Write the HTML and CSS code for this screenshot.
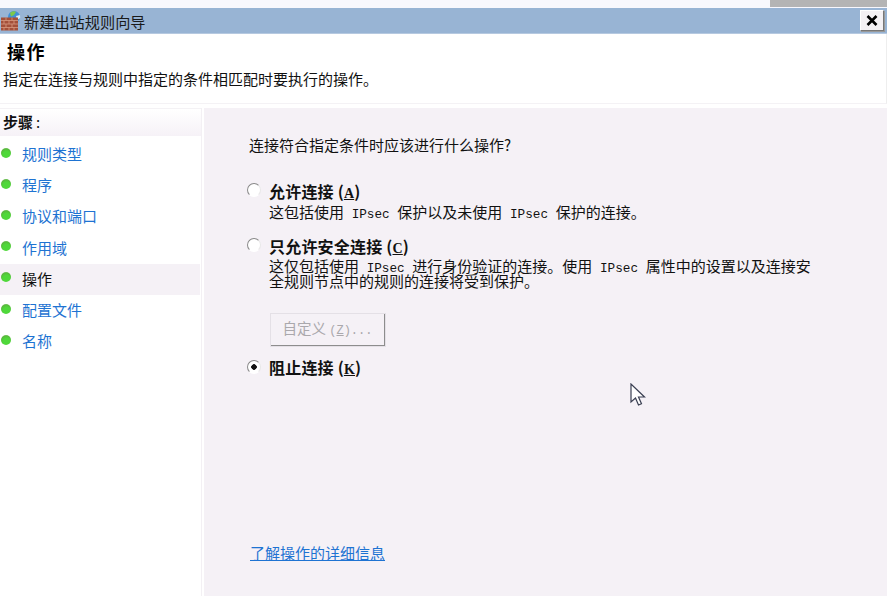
FILE: index.html
```html
<!DOCTYPE html>
<html lang="zh-CN">
<head>
<meta charset="utf-8">
<title>新建出站规则向导</title>
<link rel="stylesheet" href="styles.css">
</head>
<body>
<div class="topstrip"><div class="topstrip-grey"></div></div>
<div class="titlebar">
  <svg class="appicon" width="20" height="22" viewBox="0 0 20 22">
    <circle cx="13" cy="7" r="6" fill="#3f8fd8"/>
    <path d="M9 3c2-2 5-2 6-1l-2 3-3 1.500z" fill="#7ec84a"/>
    <path d="M15 6l4-1 .2 3-3 2z" fill="#dfeaf3"/>
    <rect x="0" y="7.500" width="17" height="13" fill="#a4503a"/>
    <path d="M0 10.500h17M0 14h17M0 17.500h17M5 7.500v3M11 7.500v3M3 10.500v3.500M8 10.500v3.500M13 10.500v3.500M5 14v3.500M11 14v3.500M3 17.500v3M8 17.500v3M13 17.500v3" stroke="#d89a80" stroke-width=".8" fill="none"/>
  </svg>
  <span class="titletext">新建出站规则向导</span>
  <div class="closebtn">
    <svg width="12" height="11" viewBox="0 0 12 11"><path d="M1.500 1l9 9M10.500 1l-9 9" stroke="#000" stroke-width="2.600" fill="none"/></svg>
  </div>
</div>
<header class="head">
  <h1 class="head-title">操作</h1>
  <p class="head-desc">指定在连接与规则中指定的条件相匹配时要执行的操作。</p>
</header>
<div class="main">
  <nav class="side">
    <div class="side-head">步骤<span class="colon">:</span></div>
    <ul class="steps">
      <li class="step"><i class="dot"></i><a>规则类型</a></li>
      <li class="step"><i class="dot"></i><a>程序</a></li>
      <li class="step"><i class="dot"></i><a>协议和端口</a></li>
      <li class="step"><i class="dot"></i><a>作用域</a></li>
      <li class="step current"><i class="dot"></i><a>操作</a></li>
      <li class="step"><i class="dot"></i><a>配置文件</a></li>
      <li class="step"><i class="dot"></i><a>名称</a></li>
    </ul>
  </nav>
  <section class="content">
    <p class="question">连接符合指定条件时应该进行什么操作?</p>
    <div class="option opt-first">
      <span class="radio"></span>
      <div>
        <div class="opt-label">允许连接 (<u>A</u>)</div>
        <div class="opt-desc">这包括使用<span class="mono"> IPsec </span>保护以及未使用<span class="mono"> IPsec </span>保护的连接。</div>
      </div>
    </div>
    <div class="option opt-second">
      <span class="radio"></span>
      <div>
        <div class="opt-label">只允许安全连接 (<u>C</u>)</div>
        <div class="opt-desc tight">这仅包括使用<span class="mono"> IPsec </span>进行身份验证的连接。使用<span class="mono"> IPsec </span>属性中的设置以及连接安<br>全规则节点中的规则的连接将受到保护。</div>
        <div class="custom">自定义 <span class="mono-btn">(<u>Z</u>)...</span></div>
      </div>
    </div>
    <div class="option opt-third">
      <span class="radio checked"></span>
      <div class="opt-label">阻止连接 (<u>K</u>)</div>
    </div>
    <a class="learn">了解操作的详细信息</a>
    <svg class="cursor" width="16" height="24" viewBox="0 0 16 24"><path d="M1 1v18l4.500-4 3 7 3-1.300-3-6.700h6z" fill="#fff" stroke="#3a3f52" stroke-width="1.200"/></svg>
  </section>
</div>
</body>
</html>
```
FILE: styles.css
```css
* { box-sizing: border-box; }
html, body { margin: 0; padding: 0; }
body {
  width: 887px;
  height: 596px;
  overflow: hidden;
  background: #fff;
  color: #111;
  font-family: "Noto Sans CJK SC", "Liberation Sans", sans-serif;
  font-size: 15px;
}
.topstrip { height: 8px; background: #f8f8fd; display: flex; justify-content: flex-end; }
.topstrip-grey { width: 117px; height: 6.500px; background: #b4b4b4; }
.titlebar {
  height: 26px;
  background: #98b4d4;
  display: flex;
  align-items: center;
  padding-left: 1px;
  border-bottom: 1px solid #b6c9e0;
}
.appicon { flex: none; }
.titletext { margin-left: 3px; font-size: 15.200px; color: #1a1a1a; line-height: 26px; }
.closebtn {
  margin-left: auto;
  margin-right: 3px;
  width: 24px;
  height: 21px;
  background: #f4f1f4;
  border: 1px solid #fff;
  border-right-color: #777;
  border-bottom-color: #777;
  box-shadow: 1px 1px 0 #999;
  display: flex;
  align-items: center;
  justify-content: center;
}
.head { height: 70px; padding: 6px 0 0 3px; border-bottom: 1px solid #f4f2f5; border-right: 1px solid #eee; }
.head-title { margin: 0 0 0 4px; font-size: 18px; line-height: 22px; font-weight: 700; color: #000; letter-spacing: 1.500px; }
.head-desc { margin: 8px 0 0; font-size: 15px; line-height: 18px; color: #111; }
.main { display: flex; height: 488px; margin-top: 4px; }
.side { width: 202px; flex: none; border-right: 1px solid #f3f0f4; }
.side-head {
  height: 28px;
  padding-left: 3px;
  font-size: 15px;
  font-weight: 700;
  line-height: 26px;
  background: linear-gradient(#fff, #f6f2f7);
  border-top: 1px solid #f4f2f5;
}
.colon { margin-left: 3px; font-weight: 400; }
.steps { list-style: none; margin: 3px 0 0; padding: 0; }
.step {
  height: 31.200px;
  width: 200px;
  display: flex;
  align-items: center;
  padding-left: 1px;
  color: #1e73d2;
  font-size: 15px;
}
.step a { margin-left: 11px; margin-top: -2px; color: inherit; }
.step.current { background: #f5f1f6; color: #111; }
.dot {
  width: 10px;
  height: 10px;
  border-radius: 50%;
  flex: none;
  margin-top: -4px;
  background: radial-gradient(circle at 55% 68%, #4fd83a 0 40%, #58b83c 68%, #cfe4c8 100%);
}
.content {
  position: relative;
  flex: 1;
  margin-left: 2px;
  background: #f5f1f6;
  padding: 27px 0 0 45px;
}
.question { margin: 0; line-height: 20px; font-size: 15px; }
.option { display: flex; }
.radio {
  flex: none;
  width: 14px;
  height: 14px;
  margin: 2px 8px 0 -2px;
  border-radius: 50%;
  background: #fff;
  border: 1.500px solid;
  border-color: #8a8a8a #e8e8e8 #fff #8a8a8a;
}
.radio.checked {
  background: radial-gradient(circle, #111 0 2.500px, #fff 3px);
  margin-top: 3px;
}
.opt-first { margin-top: 26px; }
.opt-second { margin-top: 15px; }
.opt-third { margin-top: 10px; }
.opt-label { font-weight: 700; font-size: 16px; letter-spacing: .2px; line-height: 20px; color: #111; }
.opt-label u { font-family: "Liberation Serif", serif; font-size: 14px; line-height: 0; }
.opt-desc { font-size: 15px; line-height: 18px; margin-top: 2px; white-space: nowrap; }
.opt-desc.tight { line-height: 15px; margin-top: 2px; }
.mono { font-family: "Liberation Mono", monospace; font-size: 12.700px; line-height: 0; }
.mono-btn { font-family: "Liberation Mono", monospace; font-size: 12px; line-height: 0; }
.custom {
  margin-top: 25px;
  margin-left: 1px;
  width: 116px;
  height: 34px;
  line-height: 28px;
  text-align: center;
  color: #aaa8ac;
  font-size: 14.500px;
  background: #f5f1f6;
  border: 1px solid #fff;
  border-right: 2px solid #8d8d8d;
  border-bottom: 2px solid #8d8d8d;
  outline: 1px solid #e4e0e6;
  outline-offset: -1px;
}
.learn {
  position: absolute;
  left: 46px;
  top: 435px;
  color: #1e73d2;
  font-size: 15px;
  line-height: 20px;
  text-decoration: underline;
}
.cursor { position: absolute; left: 426px; top: 275px; }
```
